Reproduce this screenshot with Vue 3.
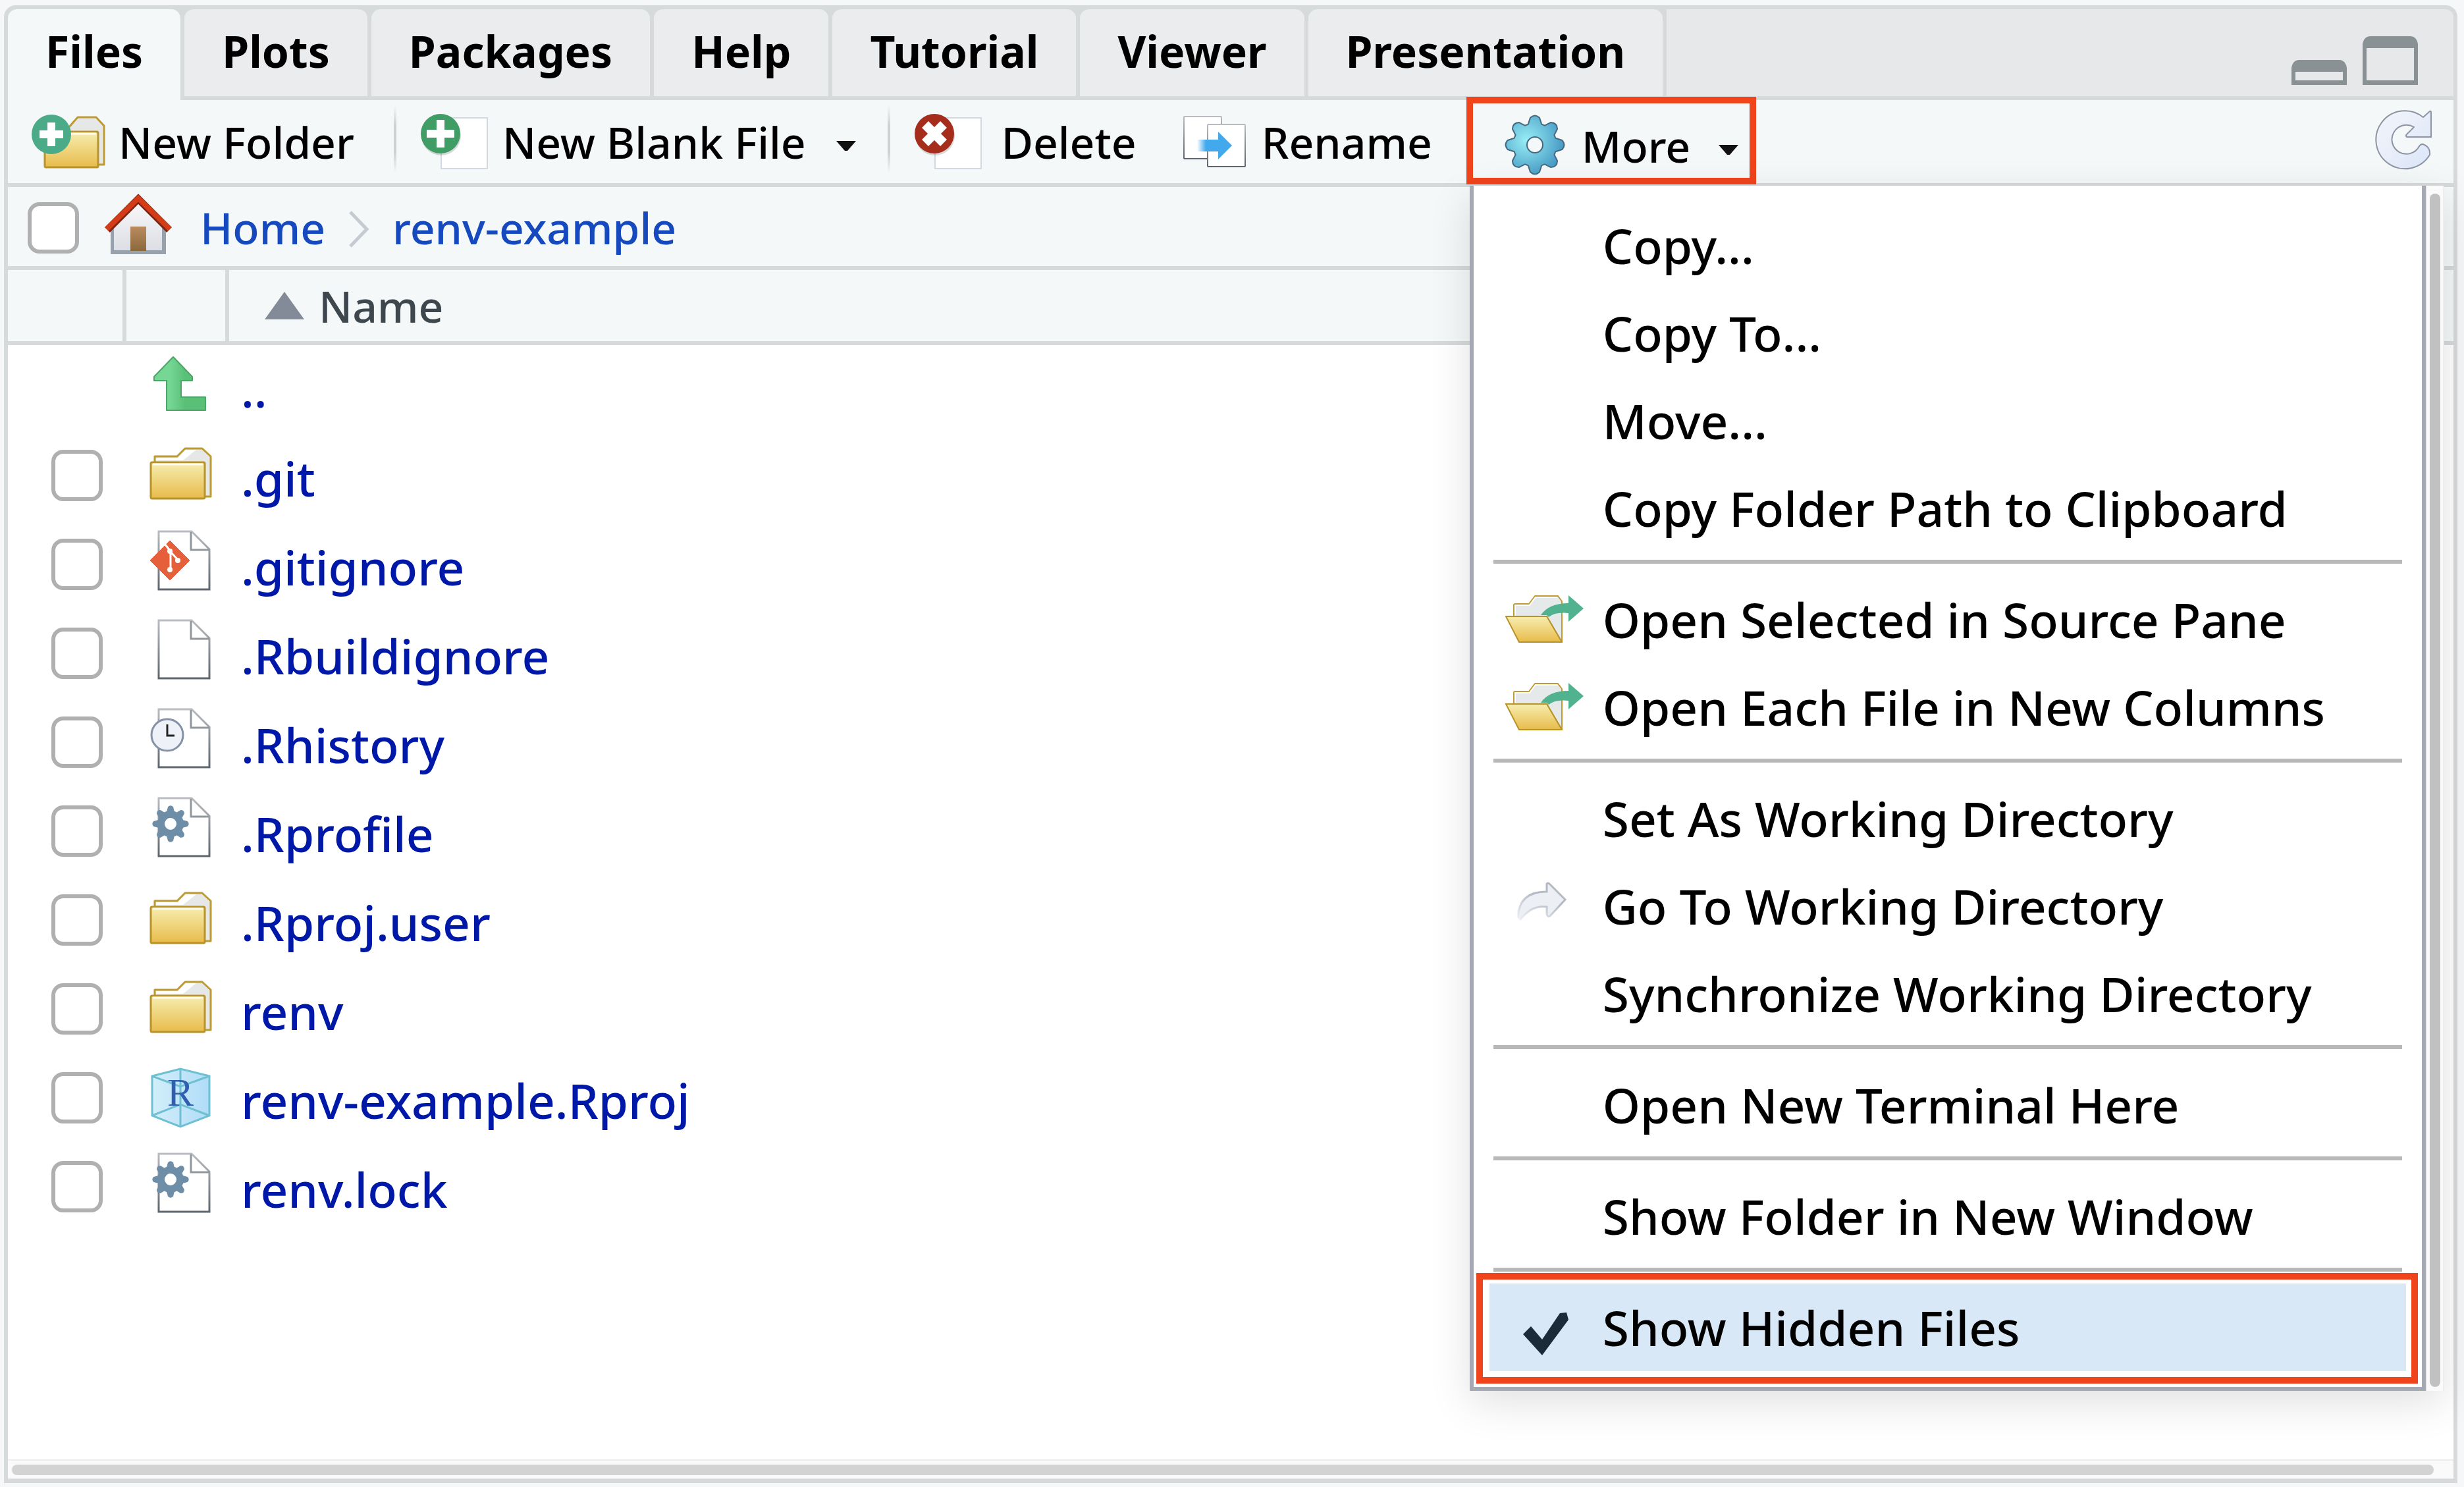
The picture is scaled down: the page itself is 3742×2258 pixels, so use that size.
<script setup>
import { ref } from 'vue'

const tabs = ['Files', 'Plots', 'Packages', 'Help', 'Tutorial', 'Viewer', 'Presentation']
const active = ref('Files')

const files = [
  { name: '..', icon: 'up' },
  { name: '.git', icon: 'folder' },
  { name: '.gitignore', icon: 'git' },
  { name: '.Rbuildignore', icon: 'doc' },
  { name: '.Rhistory', icon: 'clock' },
  { name: '.Rprofile', icon: 'gear' },
  { name: '.Rproj.user', icon: 'folder' },
  { name: 'renv', icon: 'folder' },
  { name: 'renv-example.Rproj', icon: 'rproj' },
  { name: 'renv.lock', icon: 'gear' },
]

const menu = [
  [{ label: 'Copy...' }, { label: 'Copy To...' }, { label: 'Move...' }, { label: 'Copy Folder Path to Clipboard' }],
  [{ label: 'Open Selected in Source Pane', icon: 'open' }, { label: 'Open Each File in New Columns', icon: 'open' }],
  [{ label: 'Set As Working Directory' }, { label: 'Go To Working Directory', icon: 'goto' }, { label: 'Synchronize Working Directory' }],
  [{ label: 'Open New Terminal Here' }],
  [{ label: 'Show Folder in New Window' }],
  [{ label: 'Show Hidden Files', icon: 'check', selected: true }],
]

// Eight rounded teeth around a centre point
function gearPath(c, outer, inner, half) {
  const at = (r, deg) => {
    const a = (deg * Math.PI) / 180
    return `${(c[0] + r * Math.sin(a)).toFixed(1)} ${(c[1] - r * Math.cos(a)).toFixed(1)}`
  }
  let d = ''
  for (let i = 0; i < 8; i++) {
    const t = i * 45
    d += `${i ? 'L' : 'M'}${at(inner, t - half * 1.5)} L${at(outer * 0.93, t - half * 0.8)} Q${at(outer * 1.06, t)} ${at(outer * 0.93, t + half * 0.8)} L${at(inner, t + half * 1.5)} `
  }
  return d + 'Z'
}
const smallGear = gearPath([31, 42], 28, 20, 11)
const bigGear = gearPath([46, 46], 45, 33, 12)
</script>

<template>
  <main class="page">
    <svg class="defs" width="0" height="0" aria-hidden="true">
      <defs>
        <linearGradient id="gold" x1="0" y1="0" x2="0" y2="1">
          <stop offset="0" stop-color="#f6eeb0" /><stop offset="1" stop-color="#e8bb4b" />
        </linearGradient>
        <linearGradient id="paperline" x1="0" y1="0" x2="0" y2="1">
          <stop offset="0" stop-color="#b9bdc1" /><stop offset="1" stop-color="#5f656d" />
        </linearGradient>
        <radialGradient id="sky" cx="0.36" cy="0.42" r="0.62">
          <stop offset="0" stop-color="#98eef5" /><stop offset="1" stop-color="#489cc6" />
        </radialGradient>
        <linearGradient id="ice" x1="0" y1="0" x2="1" y2="1">
          <stop offset="0" stop-color="#f4f5fa" /><stop offset="1" stop-color="#dbe6f9" />
        </linearGradient>
        <linearGradient id="door" x1="0" y1="0" x2="0" y2="1">
          <stop offset="0" stop-color="#b98c5f" /><stop offset="1" stop-color="#8b683c" />
        </linearGradient>
        <linearGradient id="wall" x1="0" y1="0" x2="0" y2="1">
          <stop offset="0" stop-color="#f8f8f9" /><stop offset="1" stop-color="#dcdee5" />
        </linearGradient>
        <linearGradient id="slide" x1="0" y1="0" x2="1" y2="0">
          <stop offset="0" stop-color="#41a9ec" stop-opacity="0" /><stop offset="0.25" stop-color="#41a9ec" />
        </linearGradient>
        <linearGradient id="leaf" x1="0" y1="0" x2="1" y2="0">
          <stop offset="0.3" stop-color="#76d795" /><stop offset="0.6" stop-color="#5ac078" />
        </linearGradient>
        <linearGradient id="cube" x1="0" y1="0" x2="1" y2="0">
          <stop offset="0" stop-color="#d3eefa" /><stop offset="1" stop-color="#b0dcf8" />
        </linearGradient>
        <linearGradient id="ghost" x1="0" y1="1" x2="0.5" y2="0">
          <stop offset="0" stop-color="#b4b9c4" stop-opacity="0" /><stop offset="0.7" stop-color="#b4b9c4" />
        </linearGradient>
      </defs>
    </svg>

    <section class="panel">
      <header class="tabs">
        <button
          v-for="t in tabs"
          :key="t"
          type="button"
          class="tab"
          :class="{ active: t === active }"
          @click="active = t"
        >{{ t }}</button>
        <div class="window-buttons">
          <button type="button" class="plain" aria-label="Minimize">
            <svg width="84" height="38" viewBox="0 0 84 38"><path fill="#8a9194" fill-rule="evenodd" d="M0 38V12Q2 0 12 0H72Q82 0 84 12V38ZM6 18V31H78V18Z" /></svg>
          </button>
          <button type="button" class="plain" aria-label="Maximize">
            <svg width="84" height="74" viewBox="0 0 84 74"><path fill="#8a9194" fill-rule="evenodd" d="M0 74V12Q2 0 12 0H72Q82 0 84 12V74ZM6 18V67H78V18Z" /></svg>
          </button>
        </div>
      </header>

      <div class="toolbar">
        <button type="button" class="tool new-folder">
          <svg width="112" height="84" viewBox="0 0 112 84">
            <path d="M48 30 70 5H98L110 18V77H98" fill="#e6e8e8" stroke="#bd9a32" stroke-width="3" stroke-linejoin="round" />
            <rect x="20" y="27" width="81" height="54" rx="2" fill="url(#gold)" stroke="#b8932a" stroke-width="3" />
            <path d="M24 30H98" stroke="#fffdf0" stroke-width="3" />
            <circle cx="30" cy="31" r="30" fill="#4bab88" />
            <path d="M12 31H48M30 13V49" stroke="#fff" stroke-width="12" />
          </svg>
          New Folder
        </button>
        <i class="sep"></i>
        <button type="button" class="tool new-file">
          <svg width="102" height="86" viewBox="0 0 102 86">
            <rect x="31" y="7" width="70" height="77" fill="#fff" stroke="#d3d9e0" stroke-width="2" />
            <circle cx="31" cy="34" r="30" fill="#000" opacity="0.15" />
            <circle cx="30" cy="31" r="30" fill="#419d66" />
            <path d="M9 31H51M30 10V52" stroke="#fff" stroke-width="12" />
          </svg>
          New Blank File
          <svg class="caret" width="30" height="16" viewBox="0 0 30 16"><path d="M0 0H30L17 15H13Z" fill="#111" /></svg>
        </button>
        <i class="sep second"></i>
        <button type="button" class="tool delete">
          <svg width="102" height="86" viewBox="0 0 102 86">
            <rect x="31" y="7" width="70" height="77" fill="#fff" stroke="#d3d9e0" stroke-width="2" />
            <circle cx="31" cy="34" r="30" fill="#000" opacity="0.15" />
            <circle cx="30" cy="31" r="30" fill="#a62c1c" />
            <path d="M16 17 44 45M44 17 16 45" stroke="#fff" stroke-width="14" />
          </svg>
          Delete
        </button>
        <button type="button" class="tool rename">
          <svg width="96" height="80" viewBox="0 0 96 80">
            <rect x="2" y="2" width="57" height="64" rx="1" fill="#fff" stroke="url(#paperline)" stroke-width="2" />
            <rect x="38" y="14" width="57" height="64" rx="1" fill="#fff" stroke="url(#paperline)" stroke-width="2" />
            <path d="M22 37H54V25L75 46 54 67V55H22Z" fill="url(#slide)" />
          </svg>
          Rename
        </button>
        <div class="more">
          <button type="button" class="tool more-button" aria-haspopup="menu" aria-expanded="true">
            <svg width="92" height="94" viewBox="0 0 92 94">
              <path :d="bigGear + 'M46 34A12 12 0 1 0 46 58A12 12 0 1 0 46 34Z'" fill="url(#sky)" fill-rule="evenodd" stroke="#45697f" stroke-width="2" stroke-linejoin="round" />
            </svg>
            More
            <svg class="caret" width="30" height="16" viewBox="0 0 30 16"><path d="M0 0H30L17 15H13Z" fill="#111" /></svg>
          </button>
          <div class="popup">
            <div class="menu" role="menu">
              <div v-for="(group, g) in menu" :key="g" class="group">
                <button
                  v-for="item in group"
                  :key="item.label"
                  type="button"
                  role="menuitem"
                  class="item"
                  :class="{ selected: item.selected }"
                >
                  <span class="glyph">
                    <svg v-if="item.icon === 'open'" width="120" height="76" viewBox="0 0 120 76">
                      <path d="M13 34V16Q13 14 15 14H36L45 2H80L86 10V72L63 33Z" fill="#e6e9e9" stroke="#c09a34" stroke-width="2" stroke-linejoin="round" />
                      <path d="M15 32V16H37L46 4H79" fill="none" stroke="#fff" stroke-width="2" />
                      <path d="M1 33H63L86 72H21Z" fill="url(#gold)" stroke="#b8932a" stroke-width="2" stroke-linejoin="round" />
                      <path d="M54 31Q66 13 96 13V1L119 21 96 41V28Q76 26 66 34L63 31Z" fill="#50b28e" />
                    </svg>
                    <svg v-else-if="item.icon === 'goto'" class="goto" width="74" height="60" viewBox="0 0 74 60">
                      <path d="M1 54Q2 14 45 14V2Q47 0 50 3L73 26 50 51Q46 53 45 48V37Q20 34 5 58" fill="#eceff4" stroke="url(#ghost)" stroke-width="3" />
                    </svg>
                    <svg v-else-if="item.icon === 'check'" class="check" width="70" height="66" viewBox="0 0 70 66">
                      <path d="M12 21 29 41 56 1 66 0 69 11 29 65 0 33Z" fill="#1c2b38" />
                    </svg>
                  </span>
                  <span class="label">{{ item.label }}</span>
                </button>
              </div>
            </div>
            <div class="vtrack"><div class="vthumb"></div></div>
          </div>
        </div>
        <button type="button" class="plain refresh" aria-label="Refresh">
          <svg width="86" height="92" viewBox="-1 -1 86 92">
            <path d="M71 11 81 2Q83 1 83 4V41H46Q44 39 46 37L57 26A22 22 0 1 0 65 55Q68 50 73 53Q82 57 81 68A44 44 0 1 1 71 11Z" fill="url(#ice)" stroke="#8e94a3" stroke-width="2" />
          </svg>
        </button>
      </div>

      <nav class="crumbs">
        <input type="checkbox" class="box" aria-label="Select all files" />
        <svg class="home" width="104" height="92" viewBox="0 0 104 92">
          <path d="M10 50 52 10 94 50V91H10Z" fill="#98a2ad" />
          <path d="M15 50 52 13 88 50V85H15Z" fill="url(#wall)" />
          <rect x="40" y="49" width="24" height="37" fill="url(#door)" />
          <path d="M5 54 52 7 99 54" fill="none" stroke="#7d2413" stroke-width="11" />
          <path d="M4 53 52 6 100 53" fill="none" stroke="#d43c18" stroke-width="8" />
        </svg>
        <a href="#home" class="crumb">Home</a>
        <svg class="chevron" width="32" height="56" viewBox="0 0 32 56"><path d="M2 2 27 28 2 54" fill="none" stroke="#c6cbd1" stroke-width="5" /></svg>
        <a href="#renv-example" class="crumb">renv-example</a>
      </nav>

      <table class="files">
        <colgroup><col class="c-check" /><col class="c-icon" /><col /></colgroup>
        <thead>
          <tr>
            <th></th>
            <th></th>
            <th>
              <div class="sort">
                <svg width="60" height="42" viewBox="0 0 60 42"><path d="M0 42 30 0 60 42Z" fill="#838a98" /></svg>
                Name
              </div>
            </th>
          </tr>
        </thead>
        <tbody>
          <tr v-for="f in files" :key="f.name">
            <td class="t-check"><input v-if="f.icon !== 'up'" type="checkbox" class="box" :aria-label="'Select ' + f.name" /></td>
            <td class="t-icon">
              <svg width="96" height="98" viewBox="0 0 96 98">
                <path v-if="f.icon === 'up'" d="M35 8 64 38V44H47V69H84V89H25V44H6V38Z" fill="url(#leaf)" stroke="#4da568" stroke-width="2" stroke-linejoin="round" />
                <g v-else-if="f.icon === 'folder'">
                  <path d="M7 34V24H41L53 12H79L92 24V85H82" fill="#e6e8e8" stroke="#bd9a32" stroke-width="3" stroke-linejoin="round" />
                  <path d="M9 30V26H42L54 14H70L50 30Z" fill="#fff" />
                  <rect x="1" y="33" width="82" height="55" rx="2" fill="url(#gold)" stroke="#b8932a" stroke-width="3" />
                  <path d="M4 36H80" stroke="#fffdf0" stroke-width="3" />
                </g>
                <g v-else-if="f.icon === 'rproj'">
                  <path d="M3 20 46 9 90 20V80L46 98 3 80Z" fill="url(#cube)" />
                  <path d="M3 20 46 9 90 20V80L46 97 3 80ZM3 20 46 36 90 20M3 80 46 63 90 80M46 9V97" fill="none" stroke="#6fc0d2" stroke-width="3" />
                  <text x="46" y="65" text-anchor="middle" class="r-letter">R</text>
                </g>
                <g v-else>
                  <path d="M13 3H63L90 30V91H13Z" fill="#fff" stroke="url(#paperline)" stroke-width="3" />
                  <path d="M62 4V31H89" fill="none" stroke="#92979c" stroke-width="3" />
                  <g v-if="f.icon === 'git'">
                    <path d="M30 17 60 47 30 77 0 47Z" fill="#e5603a" stroke="#e5603a" stroke-linejoin="round" />
                    <path d="M23 23 31 33V62M31 34 42 46" fill="none" stroke="#fff" stroke-width="3" />
                    <circle cx="30" cy="33" r="4" fill="#fff" /><circle cx="42" cy="47" r="4" fill="#fff" /><circle cx="30" cy="61" r="4" fill="#fff" />
                  </g>
                  <g v-else-if="f.icon === 'clock'">
                    <circle cx="26" cy="42" r="24" fill="#eef1f8" stroke="#8592a6" stroke-width="3" />
                    <path d="M26 26V43H37" fill="none" stroke="#222" stroke-width="3" />
                  </g>
                  <path v-else-if="f.icon === 'gear'" :d="smallGear + 'M31 33A9 9 0 1 0 31 51A9 9 0 1 0 31 33Z'" fill="#6e8ea8" fill-rule="evenodd" />
                </g>
              </svg>
            </td>
            <td class="t-name"><a href="#" class="file">{{ f.name }}</a></td>
          </tr>
        </tbody>
      </table>

      <div class="htrack"><div class="hthumb"></div></div>
    </section>
  </main>
</template>

<style>
body {
  margin: 0;
  background: #f6f7f9;
}
</style>

<style scoped>
.page {
  box-sizing: border-box;
  min-height: 100vh;
  padding: 8px 10px 6px 6px;
  display: flex;
  font-family: "Noto Sans", "Open Sans", sans-serif;
  font-size: 66px;
  font-weight: 500;
  color: #000;
}
.defs { position: absolute; }
button {
  font: inherit;
  color: inherit;
  background: none;
  border: 0;
  padding: 0;
  margin: 0;
  text-align: left;
  white-space: nowrap;
}
svg { display: block; flex: none; overflow: visible; }
a { text-decoration: none; }

.panel {
  flex: 1;
  min-width: 0;
  display: flex;
  flex-direction: column;
  border: 6px solid #d6dadb;
  border-radius: 18px 18px 0 0;
  background: #fff;
}

.tabs {
  display: flex;
  gap: 6px;
  background: #d6dadb;
}
.tab {
  box-sizing: border-box;
  height: 138px;
  padding: 0 57px 6px;
  border-bottom: 6px solid #d6dadb;
  border-radius: 14px 14px 0 0;
  background: #ebecee;
  font-weight: 700;
  line-height: 124px;
}
.tab.active { background: #f4f8f9; border-bottom-color: #f4f8f9; }
.window-buttons {
  flex: 1;
  display: flex;
  justify-content: flex-end;
  align-items: flex-end;
  gap: 24px;
  padding: 0 54px 17px 0;
  border-bottom: 6px solid #d6dadb;
  border-top-right-radius: 12px;
  background: #e6e8ea;
}

.toolbar {
  display: flex;
  height: 126px;
  border-bottom: 6px solid #d6dadb;
  background: #f4f8f9;
}
.tool {
  display: flex;
  align-items: center;
  line-height: 90px;
}
.new-folder { gap: 20px; margin-left: 36px; }
.new-file { gap: 22px; }
.new-file .caret { margin-left: 24px; margin-top: 14px; }
.delete { gap: 30px; }
.rename { gap: 24px; margin-left: 70px; }
.sep {
  width: 4px;
  margin: 8px 37px 16px 60px;
  background: linear-gradient(to bottom, #f4f8f9, #cdd1d3 30%, #cdd1d3 70%, #f4f8f9);
}
.sep.second { margin-left: 48px; }
.more {
  position: relative;
  display: flex;
  margin-left: 52px;
}
.more-button {
  gap: 25px;
  padding: 12px 27px 0 58px;
}
.more-button .caret { margin-left: 18px; margin-top: 14px; }
.more-button::after {
  content: "";
  position: absolute;
  inset: -5px 0 -2px 0;
  border: 10px solid #f0441c;
}
.refresh {
  margin: 14px 32px 0 auto;
  align-self: flex-start;
}

.popup {
  position: absolute;
  z-index: 2;
  top: 130px;
  left: 5px;
  display: flex;
  box-shadow: 0 18px 60px rgba(0, 0, 0, 0.12);
}
.menu {
  width: 1392px;
  padding: 24px;
  border: 6px solid #a4a9b4;
  border-top: 0;
  background: #fff;
  font-size: 73px;
}
.group + .group {
  margin-top: 12px;
  padding-top: 24px;
  background: linear-gradient(#b8b8b8, #b8b8b8) 6px 0 / calc(100% - 12px) 6px no-repeat;
}
.item {
  position: relative;
  display: flex;
  align-items: center;
  width: 100%;
  height: 133px;
  line-height: 131px;
}
.item.selected { background: #d9e8f7; }
.item.selected::after {
  content: "";
  position: absolute;
  inset: -16px -18px -19px -20px;
  border: 10px solid #f0441c;
}
.glyph { flex: none; width: 148px; padding-left: 24px; }
.goto { margin-left: 18px; margin-bottom: 12px; }
.check { margin-left: 27px; margin-top: 20px; }
.vtrack {
  display: flex;
  justify-content: center;
  width: 24px;
  padding: 12px 0 6px;
  border-right: 2px solid #ededed;
  border-left: 2px solid #ededed;
  background: #fafafa;
}
.vthumb { width: 16px; border-radius: 8px; background: #c1c1c1; }

.crumbs {
  display: flex;
  align-items: center;
  height: 120px;
  padding-left: 30px;
  border-bottom: 6px solid #d6dadb;
  background: #f4f8f9;
}
.box {
  appearance: none;
  display: block;
  flex: none;
  box-sizing: border-box;
  width: 78px;
  height: 78px;
  margin: 0;
  border: 6px solid #b0b0b0;
  border-radius: 18px;
  background: #fff;
}
.crumbs .box { margin-top: 4px; }
.home { margin: 0 42px 6px 38px; }
.crumb { color: #1549bd; line-height: 90px; padding-top: 2px; }
.chevron { margin: 8px 34px 0 36px; }

.files {
  width: 100%;
  table-layout: fixed;
  border-collapse: separate;
  border-spacing: 0;
}
.c-check { width: 180px; }
.c-icon { width: 156px; }
th {
  height: 108px;
  padding: 0;
  border-right: 6px solid #d6dadb;
  border-bottom: 6px solid #d6dadb;
  background: #f4f8f9;
  color: #3d474d;
  font-weight: 500;
}
th:last-child { border-right: 0; }
.sort {
  display: flex;
  align-items: center;
  gap: 22px;
  padding-left: 54px;
  line-height: 90px;
}
td { height: 135px; padding: 0; vertical-align: top; }
.t-check { padding: 24px 0 0 66px; box-sizing: border-box; }
.t-icon { padding: 10px 0 0 36px; box-sizing: border-box; }
.t-name { padding-left: 18px; font-size: 73px; line-height: 134px; box-sizing: border-box; }
.file { color: #0018a8; }
.r-letter {
  font-family: "Liberation Serif", serif;
  font-size: 60px;
  fill: #2f5fb0;
}

.htrack {
  margin-top: auto;
  padding: 6px 30px 4px 6px;
  border-top: 2px solid #ededed;
  border-bottom: 2px solid #ededed;
  background: #fafafa;
}
.hthumb { height: 16px; border-radius: 8px; background: #d3d3d3; }
</style>
